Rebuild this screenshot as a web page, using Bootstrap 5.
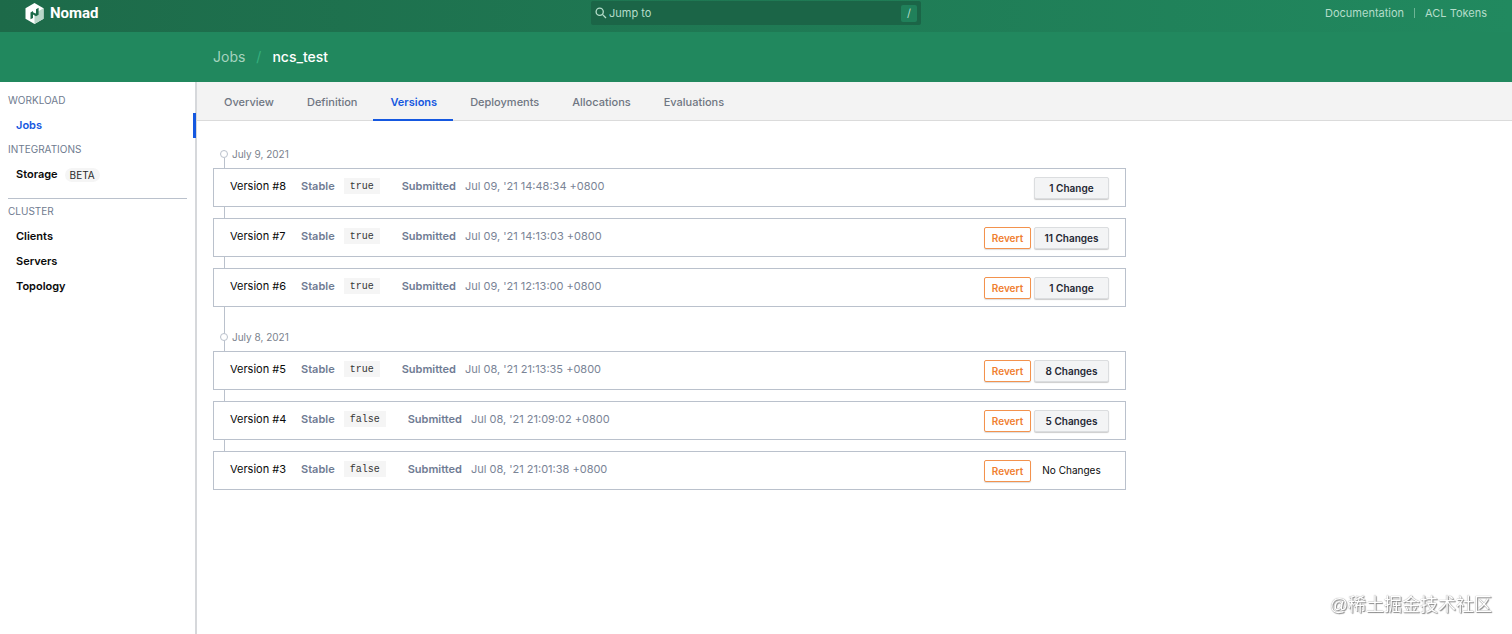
<!DOCTYPE html>
<html lang="en">
<head>
<meta charset="utf-8">
<meta name="viewport" content="width=device-width, initial-scale=1">
<title>Nomad - Job ncs_test versions</title>
<link href="https://cdn.jsdelivr.net/npm/bootstrap@5.3.0/dist/css/bootstrap.min.css" rel="stylesheet">
<style>
body{font-family:Inter,"Liberation Sans",sans-serif;font-size:11px;line-height:16px;color:#0a0a0a;background:#fff}
a{text-decoration:none;color:inherit}
.topbar{height:32px;padding:0 25px 6px;background:linear-gradient(to right,#1d6a49,#21895f)}
.side-slot{flex:1 1 0}
.brand{font-family:Roboto,sans-serif;font-size:15px;font-weight:700;color:#fff;gap:6px}
.searchbox{width:330px;height:24px;padding:0 4px;background:#1b6547;color:#b5ddca;gap:2px;border-radius:2px}
.searchbox input{background:none;border:0;outline:0;padding:0;color:inherit;min-width:0}
.searchbox input::placeholder{color:#b5ddca;opacity:1}
.slash-key{font:inherit;width:16px;height:17px;background:#20805a;color:#b5ddca;border-radius:2px;padding:0;line-height:17px;text-align:center}
.toplinks{color:#b5ddca;gap:10px}
.toplinks .rule{width:1px;height:10px;background:#6db595}
.crumbs{height:50px;padding-left:213px;background:#21885e;font-size:14px;gap:11px;color:#a6d3bf}
.crumbs .sep{color:#36b07e}
.crumbs .current{color:#fff;font-weight:500}
.shell{min-height:calc(100vh - 82px)}
.sidebar{flex:0 0 197px;border-right:2px solid #d6d8db;padding-top:10px}
.menu-label{padding:0 8px;font-size:10px;color:#6f7b8f;height:16px}
.menu-item{height:25px;line-height:25px;padding-left:16px;font-weight:600;margin-right:-1px}
.menu-label + .menu-item{margin-top:5px}
.menu-item.current{color:#1558e0;border-right:3px solid #1558e0;margin-bottom:3px}
.beta{font-size:10px;font-weight:400;line-height:14px;padding:0 5px;margin-left:7px;border-radius:8px;background:#f5f5f5;color:#2a2a2a}
.split{margin:11px 8px 4px;border-top:1px solid #bac1cc}
.tabs{height:39px;background:#f3f3f3;border-bottom:1px solid #dbdbdb;padding-left:10px}
.tabs a{padding:12px 16px 0 17px;height:39px;font-weight:500;color:#6f7682;border-bottom:2px solid transparent}
.tabs a.active{color:#1558e0;border-color:#1558e0;font-weight:600}
.content{padding:25px 16px;max-width:945px}
.timeline{position:relative}
.timeline::before{content:"";position:absolute;left:11px;top:12px;bottom:20px;width:1px;background:#bac1cc}
.day{position:relative;height:16px;font-size:10px;color:#7b828d;padding-left:7px;gap:4px;margin-bottom:6px}
.day:not(:first-child){margin-top:22px}
.dot{width:8px;height:8px;border:1px solid #bac1cc;border-radius:50%;background:#fff}
.version{position:relative;height:39px;border:1px solid #bac1cc;background:#fff;padding:0 16px 3px;margin-bottom:11px}
.version .name{width:71px}
.term{font-weight:600;color:#6f7b93}
.stamp{color:#7a8496;margin-left:9px}
.version code{font-family:"Liberation Mono",monospace;font-size:10px;line-height:12px;color:#363636;background:#f5f5f5;padding:3px 6px 1px;margin:0 22px 0 9px}
.actions{gap:3px;padding-top:4px}
.actions button,.nochange{height:22px;font-size:10px;line-height:20px;padding:0;border-radius:2px;text-align:center}
.revert{width:47px;color:#f08030;background:#fff;border:1px solid #f3924d;font-weight:600;box-shadow:0 1px 1px #ddd}
.changes,.nochange{width:75px}
.changes{background:#f3f4f5;border:1px solid #dbdddf;color:#1f2733;font-weight:600;box-shadow:0 1px 1px #ccc}
.watermark{position:fixed;right:20px;bottom:15px;font-family:"Liberation Sans","Noto Sans CJK SC",sans-serif;font-size:18px;line-height:28px;color:#fff;text-shadow:0 0 1px #777,1px 1px 1px #888}
</style>
</head>
<body>
<header>
  <nav class="topbar d-flex align-items-center">
    <div class="side-slot d-flex"><a href="#" class="brand d-flex align-items-center">
      <svg width="19" height="21" viewBox="0 0 19 21" aria-hidden="true"><path fill="#fff" d="M9.500 0 18.500 5.200v10.500L9.500 21 .5 15.700V5.200z"/><path fill="#b8d6c8" d="M9.500 10.500 18.500 5.200v10.500L9.500 21z"/><path fill="#1d6a49" d="M5.500 9.400 8 8v1.200l3 1.500V6.200l2.600-1.400v7L11 13.200l-3-1.600v3.300l-2.500 1.400z"/></svg>
      <span>Nomad</span></a></div>
    <label class="searchbox d-flex align-items-center">
      <svg width="12" height="12" viewBox="0 0 12 12" fill="none" stroke="currentColor" stroke-width="1.300" aria-hidden="true"><circle cx="4.700" cy="4.700" r="3.600"/><path d="m7.400 7.400 3.600 3.600"/></svg>
      <input class="flex-grow-1" type="text" placeholder="Jump to" aria-label="Jump to">
      <kbd class="slash-key">/</kbd>
    </label>
    <div class="side-slot toplinks d-flex justify-content-end align-items-center"><a href="#">Documentation</a><span class="rule"></span><a href="#">ACL Tokens</a></div>
  </nav>
  <nav class="crumbs d-flex align-items-center" aria-label="Breadcrumb"><a href="#">Jobs</a><span class="sep">/</span><a href="#" class="current">ncs_test</a></nav>
</header>
<div class="shell d-flex">
  <aside class="sidebar">
    <div class="menu-label">WORKLOAD</div>
    <a href="#" class="menu-item current d-block">Jobs</a>
    <div class="menu-label">INTEGRATIONS</div>
    <a href="#" class="menu-item d-flex align-items-center">Storage <span class="beta">BETA</span></a>
    <div class="split"></div>
    <div class="menu-label">CLUSTER</div>
    <a href="#" class="menu-item d-block">Clients</a>
    <a href="#" class="menu-item d-block">Servers</a>
    <a href="#" class="menu-item d-block">Topology</a>
  </aside>
  <main class="flex-grow-1">
    <nav class="tabs d-flex"><a href="#">Overview</a><a href="#">Definition</a><a href="#" class="active">Versions</a><a href="#">Deployments</a><a href="#">Allocations</a><a href="#">Evaluations</a></nav>
    <div class="content">
      <div class="timeline">
        <div class="day d-flex align-items-center"><span class="dot"></span>July 9, 2021</div>
        <div class="version d-flex align-items-center"><span class="name">Version #8</span><span class="term">Stable</span><code>true</code><span class="term">Submitted</span><span class="stamp">Jul 09, '21 14:48:34 +0800</span><div class="actions d-flex ms-auto"><button class="changes">1 Change</button></div></div>
        <div class="version d-flex align-items-center"><span class="name">Version #7</span><span class="term">Stable</span><code>true</code><span class="term">Submitted</span><span class="stamp">Jul 09, '21 14:13:03 +0800</span><div class="actions d-flex ms-auto"><button class="revert">Revert</button><button class="changes">11 Changes</button></div></div>
        <div class="version d-flex align-items-center"><span class="name">Version #6</span><span class="term">Stable</span><code>true</code><span class="term">Submitted</span><span class="stamp">Jul 09, '21 12:13:00 +0800</span><div class="actions d-flex ms-auto"><button class="revert">Revert</button><button class="changes">1 Change</button></div></div>
        <div class="day d-flex align-items-center"><span class="dot"></span>July 8, 2021</div>
        <div class="version d-flex align-items-center"><span class="name">Version #5</span><span class="term">Stable</span><code>true</code><span class="term">Submitted</span><span class="stamp">Jul 08, '21 21:13:35 +0800</span><div class="actions d-flex ms-auto"><button class="revert">Revert</button><button class="changes">8 Changes</button></div></div>
        <div class="version d-flex align-items-center"><span class="name">Version #4</span><span class="term">Stable</span><code>false</code><span class="term">Submitted</span><span class="stamp">Jul 08, '21 21:09:02 +0800</span><div class="actions d-flex ms-auto"><button class="revert">Revert</button><button class="changes">5 Changes</button></div></div>
        <div class="version d-flex align-items-center"><span class="name">Version #3</span><span class="term">Stable</span><code>false</code><span class="term">Submitted</span><span class="stamp">Jul 08, '21 21:01:38 +0800</span><div class="actions d-flex ms-auto"><button class="revert">Revert</button><span class="nochange">No Changes</span></div></div>
      </div>
    </div>
  </main>
</div>
<div class="watermark">@稀土掘金技术社区</div>
<script src="https://cdn.jsdelivr.net/npm/bootstrap@5.3.0/dist/js/bootstrap.bundle.min.js"></script>
</body>
</html>
